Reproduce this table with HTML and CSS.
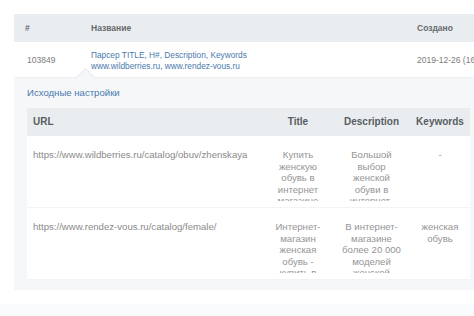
FILE: index.html
```html
<!DOCTYPE html>
<html lang="ru">

<head>
    <meta charset="UTF-8">
    <title>Парсеры</title>
    <link rel="stylesheet" href="styles.css">
</head>

<body>
    <div class="page">
        <div class="card">
            <div class="line head">
                <div class="col id">#</div>
                <div class="col name">Название</div>
                <div class="col date">Создано</div>
            </div>
            <div class="line item">
                <div class="col id">103849</div>
                <div class="col name">
                    <a class="link" href="#">Парсер TITLE, H#, Description, Keywords</a>
                    <a class="link" href="#">www.wildberries.ru, www.rendez-vous.ru</a>
                </div>
                <div class="col date">2019-12-26 (16:42)</div>
            </div>
            <div class="details">
                <a class="details-title" href="#">Исходные настройки</a>
                <table class="sources">
                    <thead>
                        <tr>
                            <th class="url">URL</th>
                            <th class="title">Title</th>
                            <th class="desc">Description</th>
                            <th class="kw">Keywords</th>
                        </tr>
                    </thead>
                    <tbody>
                        <tr>
                            <td class="url"><div class="clip">https://www.wildberries.ru/catalog/obuv/zhenskaya</div></td>
                            <td class="title"><div class="clip">Купить женскую обувь в интернет магазине</div></td>
                            <td class="desc"><div class="clip">Большой выбор женской обуви в интернет-магазине</div></td>
                            <td class="kw"><div class="clip">-</div></td>
                        </tr>
                        <tr>
                            <td class="url"><div class="clip">https://www.rendez-vous.ru/catalog/female/</div></td>
                            <td class="title"><div class="clip">Интернет-магазин женская обувь - купить в</div></td>
                            <td class="desc"><div class="clip">В интернет-магазине более 20 000 моделей женской</div></td>
                            <td class="kw"><div class="clip">женская обувь</div></td>
                        </tr>
                    </tbody>
                </table>
            </div>
        </div>
        <div class="ghost"></div>
    </div>
</body>

</html>
```

FILE: styles.css
```css
html,
body {
    margin: 0;
    background: #ffffff;
    overflow: hidden;
}

body {
    font-family: 'Liberation Sans', Arial, sans-serif;
    color: #7a7a7a;
}

.page {
    padding: 14px 0 0 14px;
    width: 520px;
}

.card {
    background: #ffffff;
}

.line {
    display: flex;
    align-items: center;
}

.col {
    box-sizing: border-box;
}

.col.id {
    width: 77px;
    padding-left: 12px;
}

.col.name {
    width: 326px;
}

.col.date {
    flex: 1;
    white-space: nowrap;
}

.head {
    height: 28px;
    background: #e9edf0;
    font-size: 8.5px;
    font-weight: bold;
    color: #666a6e;
}

.head .col.id {
    padding-left: 11px;
}

.item {
    height: 35px;
    font-size: 8.5px;
    color: #7c7c7c;
}

.item .col.id {
    padding-left: 13px;
}

.item .name {
    display: flex;
    flex-direction: column;
    line-height: 11px;
    padding-top: 2px;
    font-size: 8.3px;
}

.link {
    color: #4a79ad;
    text-decoration: none;
}

.details {
    position: relative;
    background: #f5f7f9;
    border-top: 1px solid #eef1f3;
    padding: 8px 0 10px 13px;
}

/* notch pointing at the opened row */
.details::before {
    content: '';
    position: absolute;
    top: -7px;
    left: 64px;
    width: 14px;
    height: 14px;
    background: #f5f7f9;
    border-top: 1px solid #e6eaed;
    border-left: 1px solid #e6eaed;
    transform: rotate(45deg);
}

.details-title {
    position: relative;
    display: block;
    font-size: 9.6px;
    line-height: 14px;
    color: #4a79ad;
    text-decoration: none;
    margin-bottom: 8px;
}

.sources {
    width: 443px;
    border-collapse: collapse;
    background: #ffffff;
    font-size: 9.6px;
    line-height: 11.5px;
}

.sources th {
    height: 28px;
    padding: 0 6px;
    background: #e9edf0;
    color: #595d61;
    font-size: 10px;
    text-align: center;
}

.sources th.url {
    text-align: left;
}

.sources td {
    padding: 13px 6px 6px;
    vertical-align: top;
    text-align: center;
    color: #959595;
    border-bottom: 1px solid #f1f3f5;
}

.sources td.url {
    text-align: left;
    color: #8a8a8a;
}

.url {
    width: 224px;
}

.title {
    width: 58px;
}

.desc {
    width: 65px;
}

.kw {
    width: 48px;
}

.clip {
    max-height: 52px;
    overflow: hidden;
}

.ghost {
    height: 12px;
    margin: 14px 0 0 -14px;
    background: #fafbfc;
}
```
